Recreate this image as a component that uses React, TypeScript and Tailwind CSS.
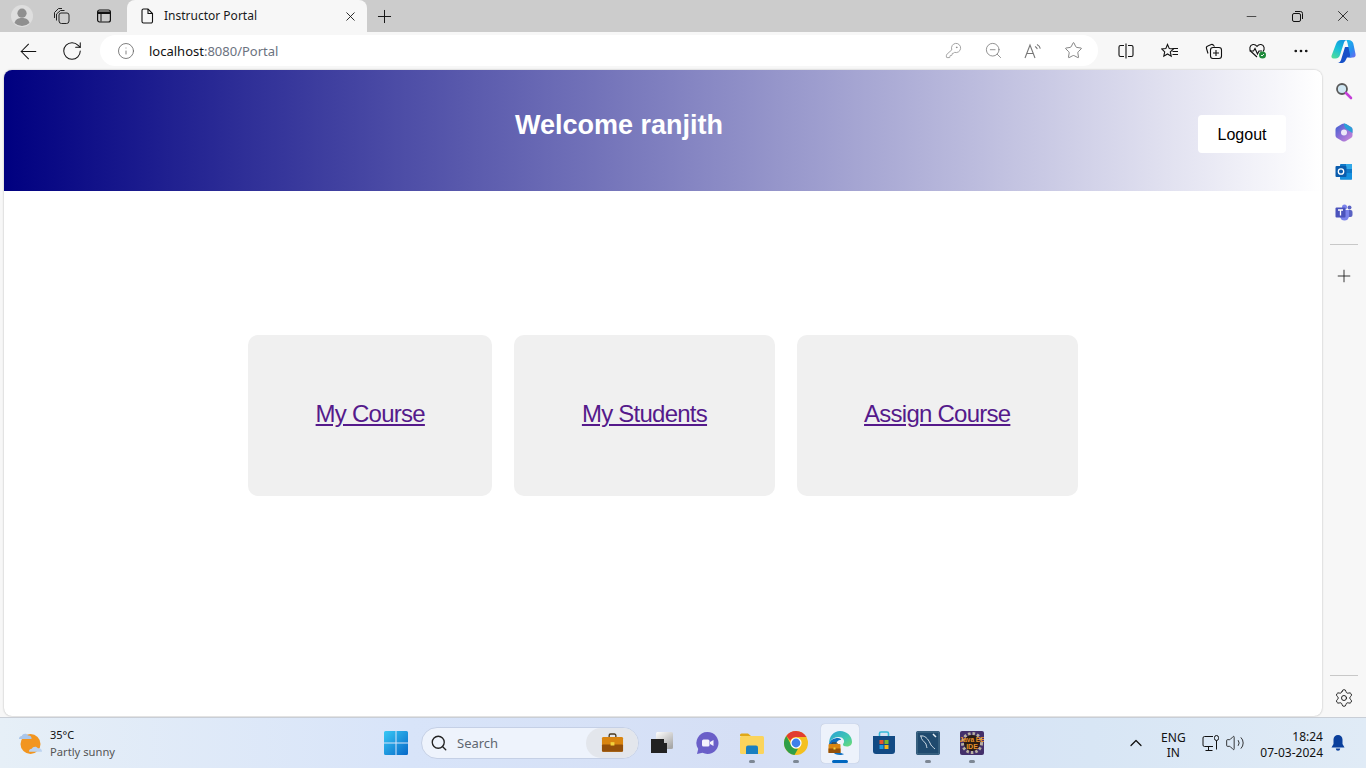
import React from 'react';
import {
  ArrowLeft,
  RotateCw,
  Info,
  KeyRound,
  ZoomOut,
  Star,
  Plus,
  X,
  Minus,
  MoreHorizontal,
  Settings,
  ChevronUp,
  Search,
  Volume2,
} from 'lucide-react';

const chrome = "font-['Noto_Sans',sans-serif]";

function Cell({ w, children, className = '' }: { w: string; children?: React.ReactNode; className?: string }) {
  return <div className={`flex shrink-0 items-center justify-center ${w} ${className}`}>{children}</div>;
}

function Profile() {
  return (
    <svg width="22" height="22" viewBox="0 0 22 22">
      <circle cx="11" cy="11" r="11" fill="#dedede" />
      <circle cx="11" cy="8.2" r="4.6" fill="#8f8f8f" />
      <path d="M3.5 18c1-3.8 4-5 7.5-5s6.500 1.200 7.500 5a11 11 0 0 1-15 0z" fill="#8f8f8f" />
    </svg>
  );
}

function Workspaces() {
  return (
    <svg width="18" height="18" viewBox="0 0 18 18" fill="none" stroke="#222" strokeWidth="1">
      <path d="M1.500 11V5.500L5.500 1.500h3.500" />
      <path d="M3.500 13.500V7L7.500 3.500h4" />
      <path d="M6 8a2 2 0 0 1 2-2h6a2 2 0 0 1 2 2v6a2.500 2.500 0 0 1-2.500 2.500h-5A2.500 2.500 0 0 1 6 14z" />
    </svg>
  );
}

function TabActions() {
  return (
    <svg width="16" height="16" viewBox="0 0 16 16" fill="none" stroke="#111" strokeWidth="1.200">
      <rect x="1.600" y="2" width="12.800" height="12" rx="2" />
      <path d="M2 3.500h12v2.500H2z" fill="#111" stroke="none" />
      <path d="M5 5.500v8" strokeWidth="1" />
    </svg>
  );
}

function PageDoc() {
  return (
    <svg width="14" height="16" viewBox="0 0 14 16" fill="none" stroke="#111" strokeWidth="1.100">
      <path d="M2 2.500A1.500 1.500 0 0 1 3.500 1H8l4.500 4.500V13.500A1.500 1.500 0 0 1 11 15H3.500A1.500 1.500 0 0 1 2 13.500z" />
      <path d="M8 1v4.500h4.500" />
    </svg>
  );
}

function Restore() {
  return (
    <svg width="11" height="11" viewBox="0 0 11 11" fill="none" stroke="#111" strokeWidth="1">
      <rect x="0.500" y="2.500" width="8" height="8" rx="1.500" />
      <path d="M3 0.500h5.500a2 2 0 0 1 2 2V8" />
    </svg>
  );
}

function ReadAloud() {
  return (
    <svg width="18" height="16" viewBox="0 0 18 16" fill="none" stroke="#777" strokeWidth="1.100">
      <path d="M1 15 6 2l5 13M2.800 10.500h6.400" />
      <path d="M11 3.500c1.300.6 2 1.500 2.300 2.700M13 1.500c1.800.9 3 2.400 3.300 4.200" />
    </svg>
  );
}

function SplitScreen() {
  return (
    <svg width="16" height="16" viewBox="0 0 16 16" fill="none" stroke="#111" strokeWidth="1.100">
      <path d="M6 2.500H2.500a1.500 1.500 0 0 0-1.500 1.500v8a1.500 1.500 0 0 0 1.500 1.500H6" />
      <path d="M10 2.500h3.500A1.500 1.500 0 0 1 15 4v8a1.500 1.500 0 0 1-1.500 1.500H10" />
      <path d="M8 0.500v15" />
    </svg>
  );
}

function Favorites() {
  return (
    <svg width="18" height="17" viewBox="0 0 18 17" fill="none" stroke="#111" strokeWidth="1.100">
      <path d="M6.500 1.500 8.300 5.600l4.200.4-3.200 2.900.9 4.300-3.700-2.200-3.700 2.200.9-4.300L.7 6l4.100-.4z" />
      <path d="M11.500 5.500h5.500M11.500 8.500h5.500M11.500 11.500h5.500" />
    </svg>
  );
}

function Collections() {
  return (
    <svg width="18" height="18" viewBox="0 0 18 18" fill="none" stroke="#111" strokeWidth="1.100">
      <path d="M3 11.500 1.500 6.500a2 2 0 0 1 1.300-2.500l3.500-1.500a2 2 0 0 1 2 .5L9.500 4.500" />
      <rect x="5.500" y="5.500" width="11" height="11" rx="2.500" />
      <path d="M11 8v6M8 11h6" />
    </svg>
  );
}

function Health() {
  return (
    <svg width="20" height="18" viewBox="0 0 20 18">
      <path
        d="M9 15 3 9.500C1 7.500 1.500 3 5 2.500c2-.3 3.200.8 4 1.800.8-1 2-2.100 4-1.800 3.500.5 4 5 2 7"
        fill="none"
        stroke="#111"
        strokeWidth="1.100"
      />
      <path d="M1.500 9h4l1.500-2.500L9.500 12l1.500-3h3" fill="none" stroke="#111" strokeWidth="1.100" />
      <circle cx="14.500" cy="13" r="3.500" fill="#1f8a3b" />
      <path d="m13 13 1 1 2-2" fill="none" stroke="#fff" strokeWidth="0.900" />
    </svg>
  );
}

function Copilot() {
  return (
    <svg width="25" height="24" viewBox="0 0 25 24">
      <defs>
        <linearGradient id="cpA" x1="0.700" y1="0" x2="0.200" y2="1">
          <stop offset="0" stopColor="#1496e0" />
          <stop offset="0.500" stopColor="#18c0d8" />
          <stop offset="1" stopColor="#4fdc9a" />
        </linearGradient>
        <linearGradient id="cpB" x1="0.200" y1="0" x2="0.900" y2="1">
          <stop offset="0" stopColor="#18b8e8" />
          <stop offset="0.600" stopColor="#2b8cf0" />
          <stop offset="1" stopColor="#6a6cf0" />
        </linearGradient>
      </defs>
      <path d="M14 8h4l2.500 10.500H16l-1.500 3c-.8 1.500-2 2.500-3.500 2.500H6.500c2 0 3-1.500 3.500-3z" fill="#1550c8" />
      <path d="M15 1h2.500c2.500 0 4 1.200 4.800 3.500L24.500 15c.5 2-.5 3.500-2.500 3.500h-5c1.500 0 2.500-1.500 2-3L16.500 4c-.3-1.500-.8-3-1.500-3z" fill="url(#cpB)" />
      <path d="M10 1h6c-1.500 0-2.500 1-3 2.500L9 16c-.7 2-2 3.500-4.500 3.500H2.500C.8 19.500 0 18 .6 16.500L5 5C6 2.500 7.500 1 10 1z" fill="url(#cpA)" />
    </svg>
  );
}

function SideSearch() {
  return (
    <svg width="18" height="18" viewBox="0 0 18 18">
      <circle cx="7" cy="7" r="5" fill="#cfe6f2" stroke="#5a5a5a" strokeWidth="1.800" />
      <path d="m11 11 5 5" stroke="#c43fd8" strokeWidth="2.600" strokeLinecap="round" />
    </svg>
  );
}

function M365() {
  return (
    <svg width="18" height="19" viewBox="0 0 18 19">
      <defs>
        <linearGradient id="m3" x1="0" y1="0" x2="1" y2="1">
          <stop offset="0" stopColor="#3a5fd0" />
          <stop offset="0.500" stopColor="#8f6fd8" />
          <stop offset="1" stopColor="#d08ad8" />
        </linearGradient>
      </defs>
      <path d="M7 1a4 4 0 0 1 4 0l5 3a3 3 0 0 1 1.500 2.500v6A3 3 0 0 1 16 15l-5 3a4 4 0 0 1-4 0l-5-3A3 3 0 0 1 .500 12.500v-6A3 3 0 0 1 2 4z" fill="url(#m3)" />
      <path d="M9 .500a4 4 0 0 1 2 .500l5 3a3 3 0 0 1 1.500 2.500V10l-4-2.500C11 6 9 4.500 9 .500z" fill="#2aa0d8" />
      <circle cx="9" cy="9.500" r="3" fill="#ece8f8" />
    </svg>
  );
}

function Outlook() {
  return (
    <svg width="18" height="18" viewBox="0 0 18 18">
      <rect x="5" y="1" width="12" height="15.500" rx="1" fill="#0f78c8" />
      <rect x="11" y="1" width="6" height="5" fill="#30a8e8" />
      <path d="M5 10h12v6.500H5z" fill="#1490df" />
      <rect x="0.500" y="3" width="11" height="11" rx="1" fill="#0a5cad" />
      <circle cx="6" cy="8.500" r="2.700" fill="none" stroke="#fff" strokeWidth="1.300" />
    </svg>
  );
}

function Teams() {
  return (
    <svg width="18" height="17" viewBox="0 0 18 17">
      <circle cx="14.500" cy="3.500" r="2" fill="#5a62c3" />
      <rect x="11" y="6" width="6.500" height="7" rx="2" fill="#5a62c3" />
      <circle cx="9.500" cy="3" r="2.500" fill="#7b83eb" />
      <path d="M5 6h9v6a4.500 4.500 0 0 1-9 0z" fill="#7b83eb" />
      <rect x="0.500" y="3.500" width="10" height="10" rx="1" fill="#4b53bc" />
      <path d="M3 6h5M5.500 6v5.500" stroke="#fff" strokeWidth="1.300" />
    </svg>
  );
}

function Weather() {
  return (
    <svg width="26" height="24" viewBox="0 0 26 24">
      <circle cx="12.500" cy="13" r="10" fill="#f2951f" />
      <path d="M1 8c0-2 1.300-3 2.800-3 .8-2.500 5-3 6.200-.5 2.300-.5 4 1.500 3.500 3.500H1.800C1.300 8 1 8 1 8z" fill="#aac6ea" />
      <path d="M11 20.500c0-1.800 1.300-2.800 2.800-2.800 .8-2.400 5-2.800 6.200-.4 2.300-.4 4.300 1.400 4 3.400H11.500z" fill="#bcd3f0" />
    </svg>
  );
}

function WindowsLogo() {
  return (
    <svg width="24" height="24" viewBox="0 0 24 24">
      <defs>
        <linearGradient id="win" x1="0" y1="0" x2="1" y2="1">
          <stop offset="0" stopColor="#38c8f5" />
          <stop offset="1" stopColor="#0668c8" />
        </linearGradient>
      </defs>
      <path d="M1.500 0H11.500V11.500H0V1.500A1.500 1.500 0 0 1 1.500 0zM12.500 0H22.500A1.500 1.500 0 0 1 24 1.500V11.500H12.500zM0 12.500H11.500V24H1.500A1.500 1.500 0 0 1 0 22.500zM12.500 12.500H24V22.500A1.500 1.500 0 0 1 22.500 24H12.500z" fill="url(#win)" />
    </svg>
  );
}

function Briefcase({ size = 24 }: { size?: number }) {
  return (
    <svg width={size} height={size * 0.84} viewBox="0 0 24 20">
      <path d="M8.500 4V2.500A1.500 1.500 0 0 1 10 1h4a1.500 1.500 0 0 1 1.500 1.500V4" fill="none" stroke="#4a3a20" strokeWidth="1.400" />
      <rect x="1" y="4" width="22" height="15.500" rx="1.500" fill="#d98510" />
      <rect x="1" y="12" width="22" height="7.500" rx="1" fill="#94500a" />
      <rect x="10" y="9.500" width="4" height="3.500" fill="#f2d23c" />
    </svg>
  );
}

function TaskView() {
  return (
    <svg width="24" height="24" viewBox="0 0 24 24">
      <defs>
        <linearGradient id="tv" x1="0" y1="0" x2="0.700" y2="1">
          <stop offset="0" stopColor="#ffffff" />
          <stop offset="1" stopColor="#a8a8a8" />
        </linearGradient>
      </defs>
      <rect x="6" y="1" width="17" height="17" rx="1.500" fill="url(#tv)" />
      <path d="M1 8h13v4h3v10H1z" fill="#222" />
    </svg>
  );
}

function MeetIcon() {
  return (
    <svg width="24" height="24" viewBox="0 0 24 24">
      <path d="M12.500 1a11 11 0 1 1-5 20.800L2 23l1.200-5A11 11 0 0 1 12.500 1z" fill="#6a5fc8" />
      <rect x="7" y="8.500" width="7.500" height="7" rx="1.500" fill="#f4f2fc" />
      <path d="m15 11 3.500-2v6l-3.500-2z" fill="#f4f2fc" />
    </svg>
  );
}

function FolderIcon() {
  return (
    <svg width="24" height="22" viewBox="0 0 24 22">
      <path d="M0 3a1.500 1.500 0 0 1 1.500-1.500H8L11 4H0z" fill="#e0a818" />
      <rect x="0" y="4" width="24" height="18" rx="1.500" fill="#fbd45c" />
      <path d="M6 15.500a2 2 0 0 1 2-2h8a2 2 0 0 1 2 2V22H6z" fill="#1a7fc0" />
    </svg>
  );
}

function ChromeIcon() {
  return (
    <svg width="24" height="24" viewBox="0 0 24 24">
      <circle cx="12" cy="12" r="12" fill="#f4c01e" />
      <path d="M12 0a12 12 0 0 1 10.400 6H12a6 6 0 0 0-5.600 3.800L2.300 5A12 12 0 0 1 12 0z" fill="#e23c30" />
      <path d="M2.300 5 7 13.500a6 6 0 0 0 7 4.200L10.500 24A12 12 0 0 1 2.300 5z" fill="#2f9e48" />
      <circle cx="12" cy="12" r="5.600" fill="#fff" />
      <circle cx="12" cy="12" r="4.400" fill="#3f80ea" />
    </svg>
  );
}

function EdgeIcon() {
  return (
    <svg width="24" height="24" viewBox="0 0 24 24">
      <defs>
        <linearGradient id="edge" x1="0" y1="0" x2="1" y2="1">
          <stop offset="0" stopColor="#2a9fd8" />
          <stop offset="0.600" stopColor="#3fc8b0" />
          <stop offset="1" stopColor="#70dc70" />
        </linearGradient>
      </defs>
      <path d="M12 0c7 0 12 5 12 11 0 3-2.500 4.500-5 4.500-3 0-4-1-4-2 0-1 1.500-1.500 1-4C15.500 7 13 6 10.500 6 6 6 2 9 1 13 1 5 6 0 12 0z" fill="url(#edge)" />
      <path d="M1 13c1-4 5-6 9-6 2 0 3 1 3 2-3 0-5 2-5 5 0 4 3 8 8 9-1 .7-2.500 1-4 1C6 24 1 19 1 13z" fill="#0f6fc0" />
      <g transform="translate(0 11)">
        <path d="M4 2V1h5v1" fill="none" stroke="#4a3a20" strokeWidth="1" />
        <rect x="0.500" y="2" width="12" height="9" rx="1" fill="#d98510" />
        <rect x="0.500" y="6.500" width="12" height="4.500" fill="#94500a" />
        <rect x="5.500" y="5.500" width="2" height="2" fill="#f2d23c" />
      </g>
    </svg>
  );
}

function StoreIcon() {
  return (
    <svg width="24" height="24" viewBox="0 0 24 24">
      <path d="M7.500 5V2.500a1.500 1.500 0 0 1 1.500-1.500h6a1.500 1.500 0 0 1 1.500 1.500V5" fill="none" stroke="#35b8d8" strokeWidth="1.600" />
      <path d="M1 5h22v15a3 3 0 0 1-3 3H4a3 3 0 0 1-3-3z" fill="#124a84" />
      <rect x="7.500" y="9" width="4" height="4" fill="#e8542a" />
      <rect x="12.500" y="9" width="4" height="4" fill="#7cb82a" />
      <rect x="7.500" y="14" width="4" height="4" fill="#1f9ce0" />
      <rect x="12.500" y="14" width="4" height="4" fill="#f7b818" />
    </svg>
  );
}

function MysqlIcon() {
  return (
    <svg width="24" height="24" viewBox="0 0 24 24">
      <rect width="24" height="24" rx="2" fill="#1f4a6e" />
      <rect x="1" y="1" width="22" height="22" rx="1.500" fill="none" stroke="#5a8098" strokeWidth="0.800" />
      <path d="M4 5c5-1 8 3 10 7 1 3 3 4 5 6M5 5c0 4 3 5 5 8 .5 1.500.5 3 1 4" fill="none" stroke="#dce6ee" strokeWidth="0.900" />
      <path d="m17 3 3 3" stroke="#e6eef4" strokeWidth="1.500" />
    </svg>
  );
}

function JavaEeIcon() {
  return (
    <svg width="24" height="24" viewBox="0 0 24 24">
      <rect width="24" height="24" rx="2" fill="#43306a" />
      <circle cx="12" cy="12" r="9.500" fill="none" stroke="#b8b0a0" strokeWidth="3" strokeDasharray="2.500 2" />
      <circle cx="12" cy="12" r="8" fill="#2a1c14" />
      <text x="12" y="11" textAnchor="middle" fontSize="6.500" fontWeight="700" fill="#e8912a" fontFamily="Liberation Sans, sans-serif">Java EE</text>
      <text x="12" y="18" textAnchor="middle" fontSize="7" fontWeight="700" fill="#e8912a" fontFamily="Liberation Sans, sans-serif">IDE</text>
    </svg>
  );
}

function TrayMonitor() {
  return (
    <svg width="18" height="17" viewBox="0 0 18 17" fill="none" stroke="#111" strokeWidth="1">
      <path d="M11 11.500H2.500A1.500 1.500 0 0 1 1 10V3a1.500 1.500 0 0 1 1.500-1.500H11" />
      <path d="M6.500 11.500v3.500M3.500 15.500h7" />
      <rect x="12.500" y="0.500" width="4" height="5" rx="2" />
      <path d="M14.500 5.500v9" />
    </svg>
  );
}

function Bell() {
  return (
    <svg width="14" height="16" viewBox="0 0 14 16" fill="#0a3f9c">
      <path d="M7 0a4.500 4.500 0 0 1 4.500 4.500V9l2 3.500H.5l2-3.500V4.500A4.500 4.500 0 0 1 7 0z" />
      <path d="M4.800 13.500h4.400a2.200 2.200 0 0 1-4.400 0z" />
    </svg>
  );
}

function RunDot() {
  return <span className="absolute bottom-[2px] left-1/2 h-[3px] w-[6px] -translate-x-1/2 rounded-full bg-[#7d8794]" />;
}

function TabStrip() {
  return (
    <div className={`flex h-8 items-stretch bg-[#cccccc] ${chrome}`}>
      <Cell w="w-[44px]"><Profile /></Cell>
      <Cell w="w-[36px]"><Workspaces /></Cell>
      <Cell w="w-[36px]" className="ml-[6px]"><TabActions /></Cell>
      <div className="ml-[5px] flex w-[240px] items-center rounded-t-[8px] bg-[#f7f7f7] pl-[13px] pr-[9px]">
        <PageDoc />
        <span className="ml-[10px] flex-1 text-[12px] text-[#1a1a1a]">Instructor Portal</span>
        <X size={15} strokeWidth={1.400} color="#111" />
      </div>
      <Cell w="w-[36px]" className="-ml-[1px]"><Plus size={21} strokeWidth={1.100} color="#111" /></Cell>
      <div className="flex-1" />
      <Cell w="w-[46px]"><Minus size={15} strokeWidth={1.100} color="#111" /></Cell>
      <Cell w="w-[46px]"><Restore /></Cell>
      <Cell w="w-[46px]"><X size={18} strokeWidth={1.100} color="#111" /></Cell>
    </div>
  );
}

function Toolbar() {
  return (
    <div className={`flex h-[38px] items-start bg-[#f7f7f7] pt-[3px] ${chrome}`}>
      <Cell w="w-[56px]" className="h-[32px]"><ArrowLeft size={25} strokeWidth={1} color="#111" /></Cell>
      <Cell w="w-[32px]" className="h-[32px]"><RotateCw size={22} strokeWidth={1.100} color="#111" /></Cell>
      <div className="ml-[12px] flex h-[31px] w-[998px] items-center rounded-full bg-white pl-[17px]">
        <Info size={18} strokeWidth={1.100} color="#666" />
        <span className="ml-[14px] flex-1 pt-[2px] text-[13px]">
          <span className="text-[#111]">localhost</span>
          <span className="text-[#6b7280]">:8080/Portal</span>
        </span>
        <Cell w="w-[40px]"><KeyRound size={17} strokeWidth={1.100} color="#888" /></Cell>
        <Cell w="w-[40px]"><ZoomOut size={19} strokeWidth={1} color="#777" /></Cell>
        <Cell w="w-[40px]"><ReadAloud /></Cell>
        <Cell w="w-[40px]" className="mr-[5px]"><Star size={19} strokeWidth={1} color="#666" /></Cell>
      </div>
      <Cell w="w-[45px]" className="ml-[5px] h-[32px]"><SplitScreen /></Cell>
      <Cell w="w-[44px]" className="h-[32px]"><Favorites /></Cell>
      <Cell w="w-[44px]" className="h-[32px]"><Collections /></Cell>
      <Cell w="w-[44px]" className="h-[32px]"><Health /></Cell>
      <Cell w="w-[42px]" className="h-[32px]"><MoreHorizontal size={18} strokeWidth={1.600} color="#111" /></Cell>
      <Cell w="w-[42px]" className="h-[32px]"><Copilot /></Cell>
    </div>
  );
}

function PortalPage() {
  const cards = ['My Course', 'My Students', 'Assign Course'];
  return (
    <main className="ml-[4px] flex w-[1318px] flex-col overflow-hidden rounded-[8px] bg-white font-['Liberation_Sans',sans-serif] shadow-[0_0_2px_rgba(0,0,0,0.3)]">
      <header className="flex h-[121px] items-start bg-[linear-gradient(90deg,#000080,#ffffff)]">
        <h1 className="ml-[511px] mt-[38px] text-[27px] font-bold leading-[34px] text-white">Welcome ranjith</h1>
        <button className="ml-auto mr-[36px] mt-[45px] h-[38px] w-[88px] rounded-[4px] bg-white pt-[1px] text-[16px] text-black">
          Logout
        </button>
      </header>
      <div className="mt-[144px] flex justify-center gap-[22px]">
        {cards.map((label) => (
          <div key={label} className="h-[161px] rounded-[10px] bg-[#f0f0f0] px-[67.5px] pt-[65px]">
            <a href="#" className="text-[24px] leading-[28px] tracking-[-0.75px] text-[#551a8b] underline">
              {label}
            </a>
          </div>
        ))}
      </div>
    </main>
  );
}

function SideRail() {
  return (
    <aside className="flex w-[43px] flex-col items-center pt-[12px]">
      <Cell w="w-[43px]" className="h-[18px]"><SideSearch /></Cell>
      <Cell w="w-[43px]" className="mt-[23px] h-[18px]"><M365 /></Cell>
      <Cell w="w-[43px]" className="mt-[22px] h-[18px]"><Outlook /></Cell>
      <Cell w="w-[43px]" className="mt-[22px] h-[18px]"><Teams /></Cell>
      <div className="mt-[23px] h-px w-[28px] bg-[#c8c8c8]" />
      <Cell w="w-[43px]" className="mt-[22px] h-[18px]"><Plus size={20} strokeWidth={1} color="#111" /></Cell>
      <div className="mt-auto h-px w-[28px] bg-[#c8c8c8]" />
      <Cell w="w-[43px]" className="mb-[8px] mt-[12px] h-[20px]"><Settings size={20} strokeWidth={1.100} color="#111" /></Cell>
    </aside>
  );
}

function Taskbar() {
  return (
    <footer className={`flex h-[51px] items-center border-t border-[#c9ced6] bg-[linear-gradient(90deg,#e6eff7_0%,#d8e4f9_30%,#d5dff5_55%,#d8e6f5_80%,#e0ebf6_100%)] ${chrome}`}>
      <div className="ml-[18px] flex w-[350px] shrink-0 items-center">
        <Weather />
        <div className="mb-[1px] ml-[6px] flex flex-col">
          <span className="text-[11px] leading-[17px] text-[#111]">35°C</span>
          <span className="text-[11.200px] leading-[17px] text-[#555]">Partly sunny</span>
        </div>
      </div>
      <Cell w="w-[44px]" className="ml-[6px]"><WindowsLogo /></Cell>
      <div className="ml-[3px] flex h-[32px] w-[218px] shrink-0 items-center rounded-full border border-[#c5d0e6] bg-[#eef3fc] pl-[8px]">
        <Search size={18} strokeWidth={1.800} color="#222" />
        <span className="ml-[9px] flex-1 pt-[2px] text-[13px] text-[#5f6670]">Search</span>
        <div className="flex h-[30px] w-[52px] items-center justify-center rounded-full bg-[#e3e6ec]">
          <Briefcase size={23} />
        </div>
      </div>
      <Cell w="w-[44px]" className="ml-[1px]"><TaskView /></Cell>
      <Cell w="w-[44px]" className="ml-[1px] mr-[1px]"><MeetIcon /></Cell>
      <div className="relative flex h-[44px] w-[44px] shrink-0 items-center justify-center"><FolderIcon /><RunDot /></div>
      <div className="relative flex h-[44px] w-[44px] shrink-0 items-center justify-center"><ChromeIcon /><RunDot /></div>
      <div className="relative mx-[3px] flex h-[39px] w-[38px] shrink-0 items-center justify-center rounded-[4px] bg-[#edf2fb] shadow-[0_0_1px_rgba(0,0,0,0.25)]">
        <EdgeIcon />
        <span className="absolute bottom-0 left-1/2 h-[3px] w-[16px] -translate-x-1/2 rounded-full bg-[#0067c0]" />
      </div>
      <Cell w="w-[44px]"><StoreIcon /></Cell>
      <div className="relative flex h-[44px] w-[44px] shrink-0 items-center justify-center"><MysqlIcon /><RunDot /></div>
      <div className="relative flex h-[44px] w-[44px] shrink-0 items-center justify-center"><JavaEeIcon /><RunDot /></div>
      <div className="flex-1" />
      <Cell w="w-[20px]" className="mr-[-1px]"><ChevronUp size={20} strokeWidth={1.500} color="#111" /></Cell>
      <div className="ml-[11px] flex w-[34px] flex-col items-center pt-[3px] text-[12px] leading-[15px] text-[#111]">
        <span>ENG</span>
        <span>IN</span>
      </div>
      <Cell w="w-[24px]" className="ml-[9px]"><TrayMonitor /></Cell>
      <Cell w="w-[20px]" className="ml-[2px]"><Volume2 size={20} strokeWidth={1} color="#111" /></Cell>
      <div className="ml-[15px] flex flex-col items-end pt-[3px] text-[12px] leading-[16px] text-[#111]">
        <span>18:24</span>
        <span>07-03-2024</span>
      </div>
      <Cell w="w-[30px]" className="mr-[13px]"><Bell /></Cell>
    </footer>
  );
}

export default function App() {
  return (
    <div className="flex h-screen flex-col overflow-hidden bg-[#f7f7f7]">
      <TabStrip />
      <Toolbar />
      <div className="flex min-h-0 flex-1 pb-[1px]">
        <PortalPage />
        <SideRail />
      </div>
      <Taskbar />
    </div>
  );
}
